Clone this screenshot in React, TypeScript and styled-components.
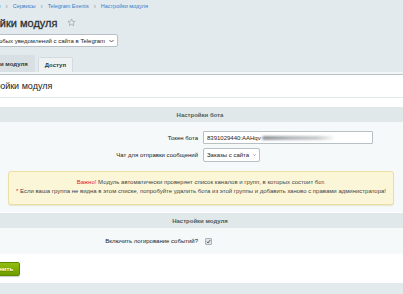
import React from "react";
import styled, { createGlobalStyle } from "styled-components";

const GlobalStyle = createGlobalStyle`
  html, body {
    margin: 0;
    padding: 0;
    background: #e3eaed;
    overflow: hidden;
  }
  body {
    font-family: "Liberation Sans", Arial, sans-serif;
    color: #333;
  }
`;

const Page = styled.div`
  width: 476px;
  margin-left: -38px;
`;

const Crumbs = styled.div`
  display: flex;
  align-items: center;
  gap: 4px;
  height: 12px;
  padding-left: 4px;
  font-size: 5.5px;
  color: #3a7bc8;
`;

const CrumbSep = styled.span`
  color: #8a9aa3;
  font-size: 6.5px;
  margin: 0 1px;
`;

const TitleRow = styled.div`
  display: flex;
  align-items: center;
  gap: 10px;
  height: 21px;
  padding-left: 1px;
`;

const Title = styled.h1`
  margin: 0;
  font-size: 11px;
  font-weight: normal;
  color: #2c2f31;
  -webkit-text-stroke: 0.3px #2c2f31;
`;

const FakeSelect = styled.div<{ $width?: number }>`
  display: flex;
  align-items: center;
  justify-content: space-between;
  gap: 4px;
  box-sizing: border-box;
  width: ${(p) => (p.$width ? `${p.$width}px` : "max-content")};
  height: ${(p) => (p.$width ? 14 : 13)}px;
  padding: 0 3px;
  background: #fff;
  border: 1px solid #b6c0c5;
  border-radius: 2px;
  font-size: 6px;
  color: #222;
  white-space: nowrap;
`;

const TopSelect = styled(FakeSelect)`
  margin-top: 1px;
`;

const Tabs = styled.div`
  display: flex;
  align-items: flex-end;
  gap: 3px;
  height: 17px;
  margin-top: 8px;
  padding-left: 3px;
`;

const Tab = styled.div<{ $active?: boolean }>`
  display: flex;
  align-items: center;
  box-sizing: border-box;
  height: ${(p) => (p.$active ? 17 : 15)}px;
  padding: 0 6px;
  font-size: 6px;
  font-weight: bold;
  color: #2f3a3f;
  border-radius: 2px 2px 0 0;
  background: ${(p) => (p.$active ? "#d8e0e3" : "#eef2f3")};
  border: 1px solid ${(p) => (p.$active ? "#d8e0e3" : "#d3dbde")};
  border-bottom: none;
`;

const Panel = styled.div`
  background: #fff;
  border-top: 1px solid #f3f6f7;
  box-shadow: inset 0 1px 0 #f3f6f7, inset 0 2px 0 #b9c3c7;
  padding-top: 2px;
`;

const PanelHeading = styled.div`
  display: flex;
  align-items: center;
  height: 22px;
  padding-left: 13px;
  font-size: 9px;
  color: #222;
  border-bottom: 1px solid #e4eaec;
`;

const Spacer = styled.div<{ $h: number }>`
  height: ${(p) => p.$h}px;
`;

const SectionHead = styled.div`
  display: flex;
  align-items: center;
  justify-content: center;
  height: 15px;
  background: #e0e8ea;
  font-size: 6px;
  font-weight: bold;
  color: #4a5e64;
`;

const SectionBody = styled.div<{ $top?: number; $bottom?: number }>`
  background: #f5f9f9;
  padding: ${(p) => p.$top ?? 0}px 0 ${(p) => p.$bottom ?? 0}px;
  border-bottom: 1px solid #fff;
`;

const FieldRow = styled.div<{ $h: number; $top?: number }>`
  display: grid;
  grid-template-columns: 238px 1fr;
  align-items: center;
  height: ${(p) => p.$h}px;
  margin-top: ${(p) => p.$top ?? 0}px;
`;

const Label = styled.div`
  text-align: right;
  padding-right: 2px;
  font-size: 6px;
  color: #222;
`;

const Field = styled.div`
  display: flex;
  align-items: center;
  padding-left: 3px;
`;

const TextInput = styled.div`
  display: flex;
  align-items: center;
  box-sizing: border-box;
  width: 170px;
  height: 13px;
  padding: 0 3px;
  background: #fff;
  border: 1px solid #b6c0c5;
  border-radius: 1px;
  font-size: 6px;
  color: #222;
`;

const Blur = styled.span`
  display: inline-block;
  width: 74px;
  height: 4px;
  margin-left: 1px;
  border-radius: 2px;
  background: linear-gradient(90deg, #8d9396 0%, #b5b9bb 40%, #c9cccd 75%, rgba(220, 222, 223, 0) 100%);
  filter: blur(0.8px);
`;

const Notice = styled.div`
  margin: 9px 44px 0 46px;
  padding: 6px 2px 8px;
  background: #fcf6d8;
  border: 1px solid #ebdfa3;
  border-radius: 3px;
  box-shadow: 0 1px 1px rgba(170, 150, 60, 0.2);
  text-align: center;
  font-size: 6px;
  line-height: 9px;
  color: #444;
  white-space: nowrap;
`;

const Red = styled.span`
  color: #e0242a;
`;

const Checkbox = styled.span`
  display: flex;
  align-items: center;
  justify-content: center;
  width: 7px;
  height: 7px;
  box-sizing: border-box;
  margin-left: 2px;
  background: #dfe4e6;
  border: 1px solid #a9b2b6;
  border-radius: 1px;
`;

const Footer = styled.div`
  display: flex;
  align-items: center;
  height: 28px;
  padding-left: 12px;
  background: #fff;
`;

const SaveButton = styled.button`
  height: 14px;
  padding: 0 6px;
  border: 1px solid #5e8a00;
  border-radius: 2px;
  background: linear-gradient(#93bd0f, #6f9c00);
  box-shadow: 0 1px 1px rgba(0, 0, 0, 0.2);
  font-family: inherit;
  font-size: 6px;
  font-weight: bold;
  color: #fff;
  text-shadow: 0 1px 0 rgba(0, 0, 0, 0.25);
`;

const Chevron = () => (
  <svg width="5" height="4" viewBox="0 0 10 6">
    <path d="M1 1l4 4 4-4" fill="none" stroke="#333" strokeWidth="1.6" />
  </svg>
);

const Star = () => (
  <svg width="9" height="9" viewBox="0 0 24 24">
    <path
      d="M12 2.5l2.9 6.2 6.6.7-5 4.5 1.4 6.6L12 17.1l-5.9 3.4 1.4-6.6-5-4.5 6.6-.7z"
      fill="none"
      stroke="#98a7ad"
      strokeWidth="2"
      strokeLinejoin="round"
    />
  </svg>
);

const Check = () => (
  <svg width="5" height="5" viewBox="0 0 10 10">
    <path d="M1.5 5.5l2.5 2.5 4.5-6" fill="none" stroke="#4a5256" strokeWidth="1.8" />
  </svg>
);

const crumbs = ["Рабочий стол", "Сервисы", "Telegram Events", "Настройки модуля"];

export default function App() {
  return (
    <>
      <GlobalStyle />
      <Page>
        <Crumbs>
          {crumbs.map((c, i) => (
            <React.Fragment key={c}>
              {i > 0 && <CrumbSep>›</CrumbSep>}
              <span>{c}</span>
            </React.Fragment>
          ))}
        </Crumbs>
        <TitleRow>
          <Title>Настройки модуля</Title>
          <Star />
        </TitleRow>
        <TopSelect>
          <span>Отправка любых уведомлений с сайта в Telegram</span>
          <Chevron />
        </TopSelect>
        <Tabs>
          <Tab $active>Настройки модуля</Tab>
          <Tab>Доступ</Tab>
        </Tabs>
        <Panel>
          <PanelHeading>Настройки модуля</PanelHeading>
          <Spacer $h={9} />
          <SectionHead>Настройки бота</SectionHead>
          <SectionBody $top={9} $bottom={7}>
            <FieldRow $h={12}>
              <Label>Токен бота</Label>
              <Field>
                <TextInput>
                  8391029440:AAHqv
                  <Blur />
                </TextInput>
              </Field>
            </FieldRow>
            <FieldRow $h={14} $top={5}>
              <Label>Чат для отправки сообщений</Label>
              <Field>
                <FakeSelect $width={57}>
                  <span>Заказы с сайта</span>
                  <Chevron />
                </FakeSelect>
              </Field>
            </FieldRow>
            <Notice>
              <Red>Важно!</Red> Модуль автоматически проверяет список каналов и групп, в которых состоит бот.
              <br />
              <Red>*</Red> Если ваша группа не видна в этом списке, попробуйте удалить бота из этой группы и добавить заново с правами администратора!
            </Notice>
          </SectionBody>
          <SectionHead>Настройки модуля</SectionHead>
          <SectionBody>
            <FieldRow $h={26}>
              <Label>Включить логирование событий?</Label>
              <Field>
                <Checkbox>
                  <Check />
                </Checkbox>
              </Field>
            </FieldRow>
          </SectionBody>
          <Footer>
            <SaveButton>Сохранить</SaveButton>
          </Footer>
        </Panel>
      </Page>
    </>
  );
}
